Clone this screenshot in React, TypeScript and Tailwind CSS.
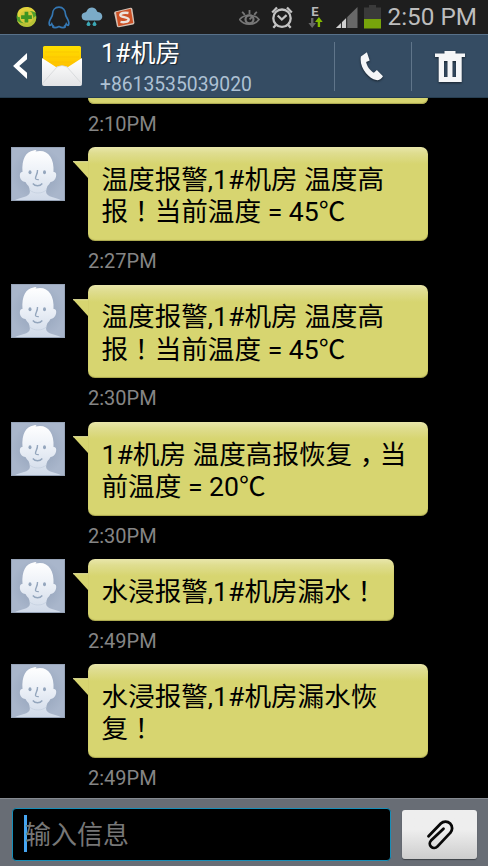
import type { ReactNode } from 'react';

interface Message {
  id: number;
  lines: string[];
  time: string;
  width: string;
}

const messages: Message[] = [
  { id: 1, lines: ['温度报警,1#机房 温度高', '报！当前温度 = 45℃'], time: '2:27PM', width: 'w-[340px]' },
  { id: 2, lines: ['温度报警,1#机房 温度高', '报！当前温度 = 45℃'], time: '2:30PM', width: 'w-[340px]' },
  { id: 3, lines: ['1#机房 温度高报恢复，当', '前温度 = 20℃'], time: '2:30PM', width: 'w-[340px]' },
  { id: 4, lines: ['水浸报警,1#机房漏水！'], time: '2:49PM', width: 'w-[306px]' },
  { id: 5, lines: ['水浸报警,1#机房漏水恢', '复！'], time: '2:49PM', width: 'w-[340px]' },
];

// Full-width punctuation sits in the middle of its cell
function renderLine(line: string): ReactNode[] {
  return line.split(/([！，])/).map((part, i) => {
    if (part === '！') {
      return <span key={i} lang="zh-TW" className="font-['Roboto','Noto_Sans_CJK_TC',sans-serif]">{part}</span>;
    }
    if (part === '，') {
      return <span key={i} className="pr-[6.600px] pl-[7.600px] [font-feature-settings:'halt']">{part}</span>;
    }
    return part;
  });
}

function StatusBar() {
  return (
    <div className="flex h-[34px] shrink-0 items-center bg-[#1e1e1e]">
      <svg className="ml-4 shrink-0" width="21" height="22" viewBox="0 0 21 22">
        <circle cx="10.5" cy="11" r="10" fill="#4f9f2c" />
        <path d="M3 4C8-1 17 0 20 7c-3-2-6-2-8-1-4 1-5 5-9 5-2 0-2-4 0-7z" fill="#e4d13c" />
        <path d="M1 14c3 4 9 4 12 2 3-1 4-5 7-6 1 6-3 11-9 11-5 0-9-3-10-7z" fill="#b9c236" />
        <circle cx="10.5" cy="11" r="6.8" fill="#d4c93a" />
        <path d="M8.600 5.800h3.700v3.400h3.600v3.700h-3.600v3.500H8.600v-3.500H5.100V9.200h3.500z" fill="#3d9422" />
      </svg>
      <svg className="ml-[11px] shrink-0" width="22" height="23" viewBox="0 0 22 23">
        <path
          d="M11 1.200c-4 0-6.500 3-6.500 7 0 2-2 4-3 7-.7 2.300-.2 4.300.5 4.200.7 0 1.400-1 1.700-1.500.4 1.100 1 1.700 1.500 2.100-.8.400-.7 1.700 1.800 1.700 1.700 0 2.900-.5 4-1.100 1.100.6 2.300 1.100 4 1.100 2.500 0 2.600-1.300 1.800-1.700.5-.4 1.100-1 1.500-2.100.3.500 1 1.500 1.700 1.500.7.100 1.200-1.900.5-4.200-1-3-3-5-3-7 0-4-2.500-7-6.500-7z"
          fill="none"
          stroke="#3477b3"
          strokeWidth="1.700"
        />
      </svg>
      <svg className="ml-[11px] shrink-0" width="22" height="20" viewBox="0 0 22 20">
        <path d="M4.500 13.500a4 4 0 0 1-.7-7.900C5.200 5 5.500 4.700 6 3.500 7.500 0 13.500-.8 15.500 3.200c.3.800.6 1.500 1.400 1.800 6 .7 5.600 8.500.4 8.500z" fill="#7babc8" />
        <circle cx="7.500" cy="17.200" r="1.900" fill="#3ba7b5" />
        <circle cx="13.500" cy="17.200" r="1.900" fill="#3ba7b5" />
        <path d="M7.500 14l1.600 3H6zM13.500 14l1.600 3H12z" fill="#3ba7b5" />
      </svg>
      <svg className="ml-[11px] shrink-0" width="21" height="21" viewBox="0 0 21 21">
        <path d="M1 4.500L16.500.7q1.500-.2 1.900 1.300l2 13.500q.1 1.500-1.200 2L5 20.300q-1.700.3-2.100-1.300L.2 6.300q-.2-1.400.8-1.800z" fill="#d4c1b5" />
        <path d="M2 5.300l14.800-3.500 2.400 14.100L4.300 19.200z" fill="#cc5126" />
        <path d="M14.500 6c-4-.8-8 0-8.200 2.100-.2 2.400 8.500 1.700 8.400 4.500-.2 2.400-4.700 3.100-8.200 2.300" fill="none" stroke="#ece2dc" strokeWidth="2.400" />
      </svg>

      <svg className="ml-[104px] shrink-0" width="21" height="17" viewBox="0 0 21 17">
        <path d="M.7 10.500C5 4.800 15.500 4.800 20 10.500 15.500 16.800 5 16.800.7 10.500z" fill="none" stroke="#777" strokeWidth="1.700" />
        <circle cx="10.500" cy="10.300" r="4" fill="none" stroke="#777" strokeWidth="2.200" />
        <path d="M10.500 10.300l3-2.800M10.500 1v4M3.200 2.700l2.600 3.200M17.800 2.700l-2.600 3.200" stroke="#777" strokeWidth="1.800" />
      </svg>
      <svg className="ml-[11px] shrink-0" width="22" height="23" viewBox="0 0 22 23">
        <circle cx="11" cy="12.200" r="8.700" fill="none" stroke="#c3c3c3" strokeWidth="2.300" />
        <path d="M6.700 9.500l4.100 4 4.800-4.300M1.200 6.500L6 1.500M20.800 6.500L16 1.500M4.800 19l-2.500 2.700M17.200 19l2.500 2.700" fill="none" stroke="#c3c3c3" strokeWidth="2.300" />
      </svg>
      <div className="ml-[14px] flex w-4 shrink-0 flex-col items-center">
        <span className="h-[11px] font-['Roboto',sans-serif] text-[13px] leading-[11px] font-bold text-[#b9b9b9]">E</span>
        <svg width="15" height="11" viewBox="0 0 15 11">
          <path d="M3 1h2.400v5H8l-3.800 5L.4 6H3z" fill="#666" />
          <path d="M9.700 10h2.400V5h2.600L10.900 0 7 5h2.700z" fill="#83b900" />
        </svg>
      </div>
      <svg className="ml-[13px] shrink-0" width="22" height="23" viewBox="0 0 23 23">
        <path d="M22.500.5v22H0z" fill="#686868" />
        <path d="M10.500 12.300v10.200H0z" fill="#d0d0d0" />
        <path d="M5.700 16v7M11.200 9v14" stroke="#1e1e1e" strokeWidth="1" />
      </svg>
      <svg className="ml-[6px] shrink-0" width="17" height="24" viewBox="0 0 17 24">
        <path d="M5 0h7v2.500h5V14H0V2.500h5z" fill="#3a3a3a" />
        <path d="M0 14h17v9.500H0z" fill="#77a40b" />
      </svg>
      <span className="ml-[6.500px] font-['Roboto',sans-serif] text-[24.300px] leading-none whitespace-nowrap text-[#bdbdbd]">2:50 PM</span>
    </div>
  );
}

function Header() {
  return (
    <header className="flex h-16 shrink-0 items-center border-t border-b border-t-[#58718a] border-b-[#263d50] bg-[#354c63]">
      <svg className="ml-3 shrink-0" width="16" height="26" viewBox="0 0 16 27">
        <path d="M15.300 0v6.500L7.200 13.500l8.100 7V27L.8 13.500z" fill="#fff" />
      </svg>
      <svg className="ml-[14px] shrink-0" width="40" height="40" viewBox="0 0 40 40">
        <defs>
          <linearGradient id="letter" x1="0" y1="0" x2="0" y2="1">
            <stop offset="0" stopColor="#ffe000" />
            <stop offset="1" stopColor="#ffb400" />
          </linearGradient>
          <linearGradient id="envelope" x1="0" y1="0" x2="0" y2="1">
            <stop offset="0" stopColor="#fff" />
            <stop offset="1" stopColor="#e3e4e6" />
          </linearGradient>
        </defs>
        <rect x="1" y="0" width="38" height="30" rx="1.500" fill="url(#letter)" />
        <path d="M3 6h34M3 11h34M3 16h34" stroke="#f6b800" strokeWidth=".5" />
        <path d="M0 12l14 9q6-2.500 12 0L40 12v26q0 2-2 2H2q-2 0-2-2z" fill="url(#envelope)" />
        <path d="M0 38l15-17q5-3 10 0l15 17" fill="none" stroke="#d0d2d5" strokeWidth=".7" />
      </svg>
      <div className="ml-[19px] flex w-[233px] shrink-0 flex-col pt-[5px]">
        <span lang="zh-CN" className="h-[31px] font-['Roboto','Noto_Sans_CJK_SC',sans-serif] text-[25px] leading-[32px] text-white [text-shadow:1px_1px_1px_#0008]">1#机房</span>
        <span className="-ml-px font-['Roboto',sans-serif] text-[19.300px] leading-[31px] text-[#adc1d4]">+8613535039020</span>
      </div>
      <div className="flex h-[49px] w-[77px] shrink-0 items-center justify-center border-l border-[#60758a] pr-1">
        <svg width="23" height="31" viewBox="0 0 25 32" className="drop-shadow-[0_1px_1px_#0008]">
          <path d="M1 5L7.500.5l3 9-3.800 1.600c.6 4.400 4.400 9.500 8.400 11.800l3.200-3L25 26.500c-2 3-4.700 4.800-7.400 4.300C9.500 28.800-1.200 17.500 1 5z" fill="#f5f6f8" />
        </svg>
      </div>
      <div className="flex h-[49px] flex-1 items-center justify-center border-l border-[#60758a]">
        <svg width="30" height="31" viewBox="0 0 30 31" className="drop-shadow-[0_1px_1px_#0008]">
          <path fillRule="evenodd" d="M9.500 0h11v2.500H30V6h-3.300v25H3.700V6H0V2.500h9.500zM9 10v16h3.500V10zm8.500 0v16H21V10z" fill="#f5f6f8" />
        </svg>
      </div>
    </header>
  );
}

function Avatar() {
  return (
    <svg className="-mt-[0.500px] h-[54px] w-[54px] shrink-0" viewBox="0 0 54 54">
      <defs>
        <radialGradient id="backdrop">
          <stop offset="0" stopColor="#8f9fb7" />
          <stop offset="1" stopColor="#a9b6cb" />
        </radialGradient>
        <linearGradient id="skin" x1="0" y1="0" x2="0" y2="1">
          <stop offset="0" stopColor="#fff" />
          <stop offset=".4" stopColor="#eef2f8" />
          <stop offset="1" stopColor="#cfd9e8" />
        </linearGradient>
      </defs>
      <rect width="54" height="54" fill="url(#backdrop)" />
      <path
        d="M3 54c2-3 13-3 15.500-7.500.8-2 .3-4.500-1-7.500-1.500-1.500-2.300-2.500-3-4-4-.5-6-4-5.600-7.300.2-2.200 1.300-3 2.600-2.700C10.500 12 15 4.500 22.500 3.500c1.500-.3 2-.5 3-.5l-1 1.500C36 1.500 43.500 10 42.500 25c1.500-.3 2.700.7 2.700 2.700 0 3.300-2 6.800-5.700 7.300-.7 1.500-1.500 2.500-3 4-1.300 3-1.800 5.500-1 7.500C38 51 49 51 51 54z"
        fill="url(#skin)"
      />
      <path d="M18.500 43c5 4 12 4 17 0" fill="none" stroke="#c5d0e0" strokeWidth=".8" />
      <ellipse cx="19" cy="25.200" rx="1.500" ry="2" fill="#94a6bd" />
      <ellipse cx="33.500" cy="25.200" rx="1.500" ry="2" fill="#94a6bd" />
      <path d="M26.500 23c.3 4-2.300 6-2 8.500.2 1.300 1.800 1.200 3.300 1.100M21.800 36.500c2.500 3 7 3 9.500 0" fill="none" stroke="#94a6bd" strokeWidth="1.400" />
      <rect x=".5" y=".5" width="53" height="53" fill="none" stroke="#97a4b8" />
    </svg>
  );
}

function TimeLabel({ time }: { time: string }) {
  return (
    <div className="h-[43.600px] pl-[88px] font-['Roboto',sans-serif] text-[20px] leading-[41.500px] text-[#858585]">{time}</div>
  );
}

function MessageRow({ message }: { message: Message }) {
  return (
    <div>
      <div className="flex items-start pl-[11px]">
        <Avatar />
        <svg className="mt-[14px] ml-2 shrink-0" width="15" height="18" viewBox="0 0 15 18">
          <path d="M0 .5h15V17z" fill="#d7d570" />
          <path d="M0 .7h15" stroke="#e8e6a1" strokeWidth="1" />
        </svg>
        <div
          lang="zh-CN"
          className={`${message.width} rounded-[7px] bg-[#d7d570] bg-[linear-gradient(#e9e6ab_0,#dfdd90_6px,#d7d570_17px)] pt-[16.500px] pb-[12.300px] pl-[13.500px] font-['Roboto','Noto_Sans_CJK_SC',sans-serif] text-[26.600px] leading-[32.500px] whitespace-pre text-black shadow-[inset_0_-1px_1px_#aaa74e]`}
        >
          {message.lines.map((line) => (
            <div key={line} className="h-[32.500px]">{renderLine(line)}</div>
          ))}
        </div>
      </div>
      <TimeLabel time={message.time} />
    </div>
  );
}

function Composer() {
  return (
    <div className="flex h-[68px] shrink-0 items-start border-t border-[#858a91] bg-[#686d75] pt-[9px] pl-3">
      <div className="flex h-[53px] w-[379px] items-center rounded-[4px] border-[1.500px] border-[#168db7] bg-black pb-[2px] pl-[11px]">
        <div className="h-[37px] w-[3px] bg-[#46a5f1]" />
        <span lang="zh-CN" className="-ml-[2px] pb-px font-['Noto_Sans_CJK_SC',sans-serif] text-[26px] leading-none text-[#777]">输入信息</span>
      </div>
      <button className="mt-[2px] ml-[11px] flex h-[49px] w-[75px] items-center justify-center rounded-[3px] bg-linear-to-b from-[#eee] from-40% to-[#cdcdcd] shadow-[0_1px_1px_#3e4248]">
        <svg width="28" height="31" viewBox="0 0 28 31" fill="none" stroke="#080808" strokeWidth="2.800" strokeLinecap="round">
          <path d="M2.500 17.200L14.800 4.600a6.600 6.600 0 0 1 9.400 9.300L11.300 27.600a4.300 4.300 0 0 1-6.300-6L17.500 9.800" />
        </svg>
      </button>
    </div>
  );
}

export default function App() {
  return (
    <div className="flex h-[866px] w-[488px] flex-col overflow-hidden bg-black">
      <StatusBar />
      <Header />
      <main className="min-h-0 flex-1 overflow-hidden">
        <div className="ml-[88px] h-[5.700px] w-[340px] rounded-b-[7px] bg-[#d7d570] shadow-[inset_0_-1px_1px_#aaa74e]" />
        <TimeLabel time="2:10PM" />
        {messages.map((message) => (
          <MessageRow key={message.id} message={message} />
        ))}
      </main>
      <Composer />
    </div>
  );
}
